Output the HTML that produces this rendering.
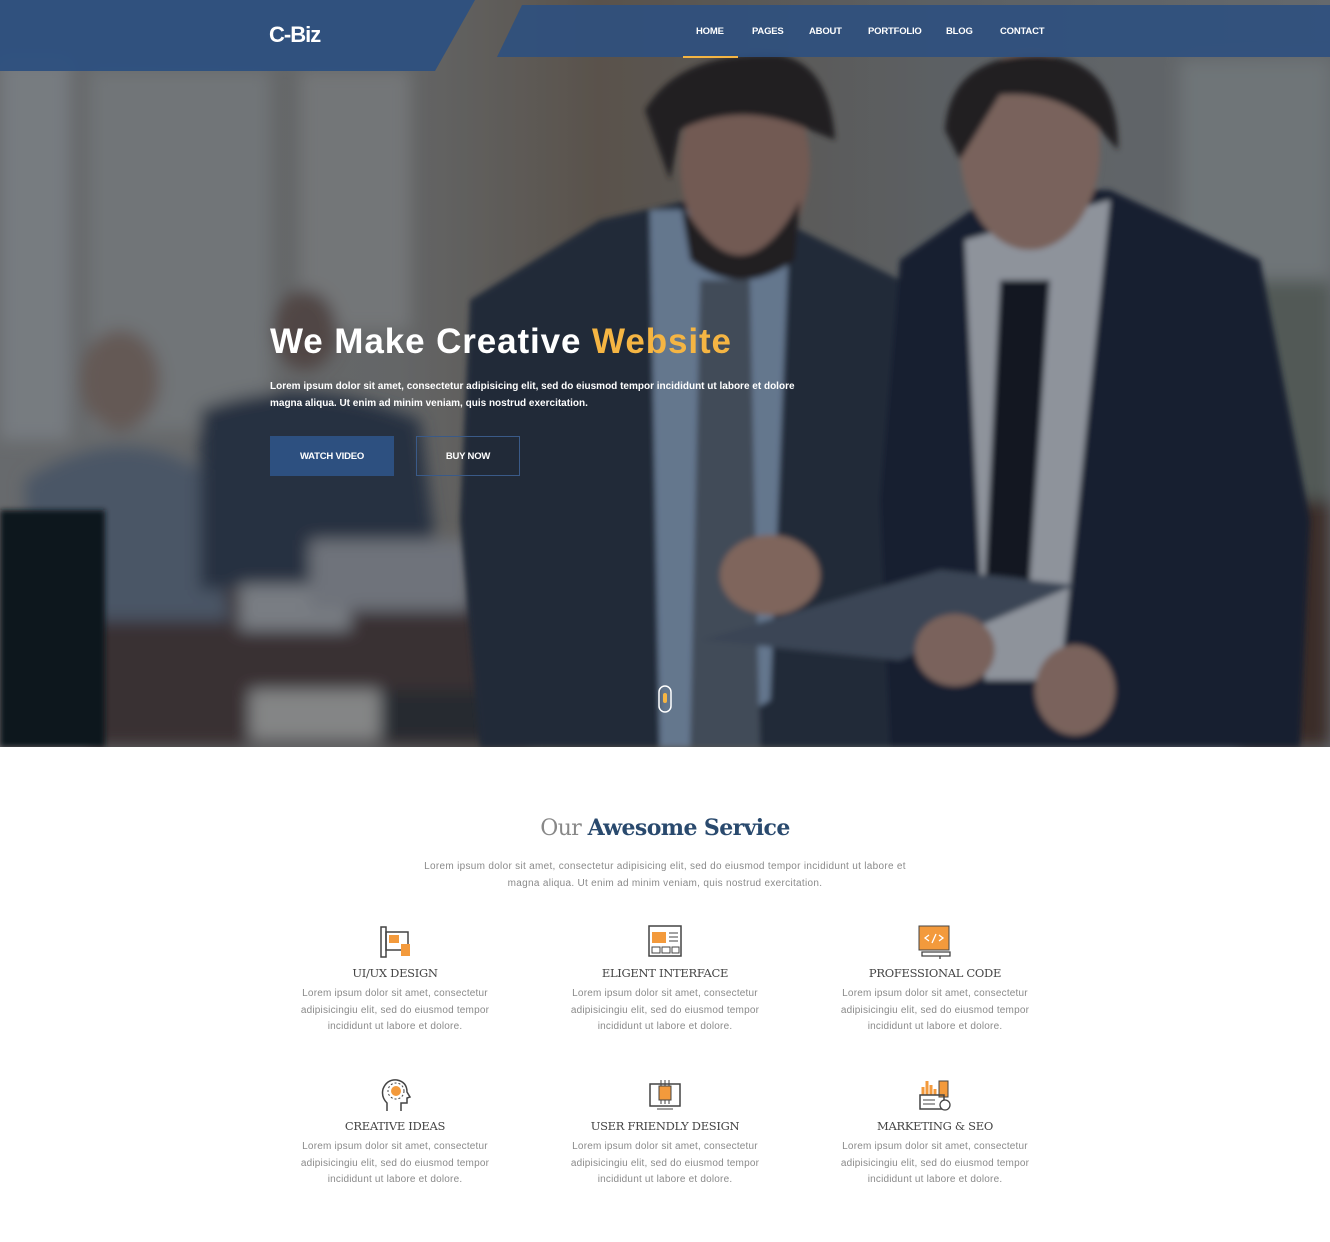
<!DOCTYPE html>
<html><head><meta charset="utf-8"><style>
*{margin:0;padding:0;box-sizing:border-box}
body{width:1330px;height:1242px;background:#fff;font-family:"Liberation Sans",sans-serif;overflow:hidden;position:relative}
#hero{position:absolute;left:0;top:0;width:1330px;height:747px;overflow:hidden}
.nav a{position:absolute;top:26px;color:#fff;font-size:9.5px;font-weight:bold;letter-spacing:-0.2px;text-decoration:none}
h1{position:absolute;left:270px;top:322px;font-size:35px;color:#fff;font-weight:bold;letter-spacing:0.9px}
h1 span{color:#f5b543}
.sub{position:absolute;left:270px;top:378px;width:540px;color:#fff;font-size:10px;line-height:17px;font-weight:bold;letter-spacing:0px}
.btn{position:absolute;top:436px;height:40px;color:#fff;font-size:9.5px;font-weight:bold;display:flex;align-items:center;justify-content:center;letter-spacing:-0.2px}
.title{position:absolute;left:0;width:1330px;top:815px;text-align:center;font-family:"DejaVu Serif",serif;font-size:22px;color:#2a4a6e;letter-spacing:-0.6px}
.title span{color:#888;font-weight:normal}
.lead{position:absolute;left:410px;width:510px;top:858px;text-align:center;color:#8a8a8a;font-size:10px;line-height:17px;letter-spacing:0.3px}
.svc{position:absolute;width:230px;text-align:center}
.svc svg{display:block;margin:0 auto}
.svc h3{font-family:"DejaVu Serif",serif;font-weight:normal;font-size:11.5px;color:#444;margin-top:6px;letter-spacing:-0.3px}
.svc p{color:#8a8a8a;font-size:10px;line-height:16.5px;margin:6px auto 0;width:205px;letter-spacing:0.2px}
</style></head><body>
<div id="hero">
<svg width="1330" height="747" style="position:absolute;left:0;top:0">
<defs>
<filter id="b8"><feGaussianBlur stdDeviation="8"/></filter>
<filter id="b3"><feGaussianBlur stdDeviation="3"/></filter>
<linearGradient id="bg" x1="0" x2="1"><stop offset="0" stop-color="#8f8d88"/><stop offset=".3" stop-color="#8a8780"/><stop offset=".45" stop-color="#7b6b58"/><stop offset=".7" stop-color="#7e7e7a"/><stop offset="1" stop-color="#8b8b88"/></linearGradient>
</defs>
<rect width="1330" height="747" fill="url(#bg)"/>
<g filter="url(#b8)">
<rect x="0" y="60" width="70" height="380" fill="#a5a6a4"/>
<rect x="90" y="70" width="180" height="360" fill="#9c9c98"/>
<rect x="300" y="70" width="110" height="260" fill="#a09e98"/>
<rect x="1180" y="60" width="150" height="220" fill="#9a9c98"/>
<rect x="1240" y="280" width="90" height="230" fill="#6f7468"/>
<rect x="1240" y="500" width="90" height="247" fill="#4f3428"/>
<rect x="90" y="590" width="440" height="157" fill="#4e3a34"/>
<ellipse cx="120" cy="380" rx="40" ry="50" fill="#8a7466"/>
<path d="M25 480 Q120 420 200 470 L230 620 L30 620Z" fill="#65707e"/>
<ellipse cx="305" cy="330" rx="32" ry="40" fill="#6e5a50"/>
<path d="M200 410 Q300 370 420 420 L440 580 L200 590Z" fill="#323a48"/>
<rect x="240" y="585" width="110" height="45" fill="#a8a8a8"/>
<rect x="310" y="540" width="160" height="70" fill="#9a9a9c"/>
<rect x="250" y="690" width="150" height="50" fill="#b8b4ac"/>
<rect x="380" y="690" width="120" height="50" fill="#333"/>
</g>
<rect x="0" y="510" width="105" height="237" fill="#111418" filter="url(#b3)"/>
<g filter="url(#b3)">
<path d="M470 300 L600 220 L690 200 L780 220 L900 280 L935 560 L900 747 L480 747 L460 520Z" fill="#2b313e"/>
<path d="M650 210 L790 210 L770 700 L690 747 L660 747Z" fill="#8a9fb7"/>
<path d="M700 280 L750 280 L760 747 L690 747Z" fill="#59606a"/>
<ellipse cx="745" cy="165" rx="65" ry="95" fill="#9e7663"/>
<path d="M645 110 Q680 50 780 55 Q830 65 835 140 L810 130 Q740 100 680 130 L670 180 Z" fill="#2b221e"/>
<path d="M680 200 Q740 310 800 200 L795 260 Q740 300 690 260Z" fill="#2a211c"/>
<path d="M900 260 L1000 190 L1110 190 L1260 260 L1310 520 L1300 747 L890 747 L880 500Z" fill="#1c2132"/>
<path d="M965 240 L1110 200 L1060 680 L985 680Z" fill="#c6c7cb"/>
<path d="M1000 280 L1050 280 L1030 580 L985 580Z" fill="#15171c"/>
<ellipse cx="1030" cy="150" rx="70" ry="100" fill="#a88270"/>
<path d="M945 130 Q950 55 1040 55 Q1120 60 1118 150 L1100 130 Q1060 90 1000 95 L960 160Z" fill="#2a201c"/>
<ellipse cx="770" cy="575" rx="50" ry="40" fill="#b08670"/>
<path d="M700 640 L940 570 L1075 585 L900 660 Z" fill="#505866"/>
<ellipse cx="955" cy="650" rx="40" ry="36" fill="#a98270"/>
<ellipse cx="1075" cy="690" rx="40" ry="45" fill="#a98270"/>
</g>
<rect width="1330" height="747" fill="#0c1a30" opacity="0.3"/>
<rect x="659" y="686" width="12" height="26" rx="6" fill="none" stroke="#fff" stroke-width="1.5"/>
<rect x="663" y="693" width="4" height="10" rx="2" fill="#f5b543"/>
</svg>
<svg width="1330" height="75" style="position:absolute;left:0;top:0">
<polygon points="0,0 475,0 435,71 0,71" fill="#2d5080" opacity=".95"/>
<polygon points="522,5 1330,5 1330,57 497,57" fill="#2d5080" opacity=".9"/>
<rect x="683" y="56" width="55" height="2" fill="#f5b543"/>
</svg>
<div style="position:absolute;left:269px;top:22px;color:#fff;font-size:22px;font-weight:bold;letter-spacing:-1px">C-Biz</div>
<div class="nav"><a style="left:696px">HOME</a><a style="left:752px">PAGES</a><a style="left:809px">ABOUT</a><a style="left:868px">PORTFOLIO</a><a style="left:946px">BLOG</a><a style="left:1000px">CONTACT</a></div>
<h1>We Make Creative <span>Website</span></h1>
<div class="sub">Lorem ipsum dolor sit amet, consectetur adipisicing elit, sed do eiusmod tempor incididunt ut labore et dolore magna aliqua. Ut enim ad minim veniam, quis nostrud exercitation.</div>
<div class="btn" style="left:270px;width:124px;background:#2d5080">WATCH VIDEO</div>
<div class="btn" style="left:416px;width:104px;border:1px solid #3a5a88">BUY NOW</div>
</div>
<div class="title"><span>Our</span> <b>Awesome Service</b></div>
<div class="lead">Lorem ipsum dolor sit amet, consectetur adipisicing elit, sed do eiusmod tempor incididunt ut labore et magna aliqua. Ut enim ad minim veniam, quis nostrud exercitation.</div>

<div class="svc" style="left:280px;top:924px"><svg width="36" height="36" viewBox="0 0 36 36"><rect x="4" y="3" width="5" height="30" fill="none" stroke="#444" stroke-width="1.5"/><rect x="9" y="8" width="22" height="18" fill="none" stroke="#444" stroke-width="1.5"/><rect x="12" y="11" width="10" height="8" fill="#f39a3c"/><rect x="24" y="20" width="9" height="12" fill="#f39a3c"/></svg><h3>UI/UX DESIGN</h3><p>Lorem ipsum dolor sit amet, consectetur adipisicingiu elit, sed do eiusmod tempor incididunt ut labore et dolore.</p></div>
<div class="svc" style="left:550px;top:924px"><svg width="36" height="36" viewBox="0 0 36 36"><rect x="2" y="2" width="32" height="30" fill="none" stroke="#444" stroke-width="1.5"/><rect x="5" y="8" width="14" height="11" fill="#f39a3c"/><path d="M22 9h9M22 13h9M22 17h9M5 23h8v6H5zM15 23h8v6h-8zM25 23h7v6h-7z" stroke="#444" fill="none"/></svg><h3>ELIGENT INTERFACE</h3><p>Lorem ipsum dolor sit amet, consectetur adipisicingiu elit, sed do eiusmod tempor incididunt ut labore et dolore.</p></div>
<div class="svc" style="left:820px;top:924px"><svg width="36" height="36" viewBox="0 0 36 36"><rect x="2" y="2" width="30" height="24" fill="#f39a3c" stroke="#444"/><path d="M12 11l-4 3 4 3M22 11l4 3-4 3M19 10l-4 9" stroke="#fff" fill="none" stroke-width="1.3"/><path d="M5 28h28v4H5zM15 32h8v3" stroke="#444" fill="none" stroke-width="1.3"/></svg><h3>PROFESSIONAL CODE</h3><p>Lorem ipsum dolor sit amet, consectetur adipisicingiu elit, sed do eiusmod tempor incididunt ut labore et dolore.</p></div>
<div class="svc" style="left:280px;top:1077px"><svg width="36" height="36" viewBox="0 0 36 36"><path d="M10 34V26Q4 20 6 12Q10 2 20 3Q30 5 30 15L33 20L30 21V26H24V34" fill="none" stroke="#444" stroke-width="1.5"/><circle cx="19" cy="14" r="5" fill="#f39a3c"/><circle cx="19" cy="14" r="8" fill="none" stroke="#444" stroke-dasharray="2 2"/></svg><h3>CREATIVE IDEAS</h3><p>Lorem ipsum dolor sit amet, consectetur adipisicingiu elit, sed do eiusmod tempor incididunt ut labore et dolore.</p></div>
<div class="svc" style="left:550px;top:1077px"><svg width="36" height="36" viewBox="0 0 36 36"><rect x="3" y="7" width="30" height="22" fill="none" stroke="#444" stroke-width="1.5"/><rect x="12" y="9" width="12" height="14" fill="#f39a3c" stroke="#444"/><path d="M14 3v6M18 3v6M22 3v6M14 23v4M18 23v4M22 23v4M10 32h16" stroke="#444" fill="none"/></svg><h3>USER FRIENDLY DESIGN</h3><p>Lorem ipsum dolor sit amet, consectetur adipisicingiu elit, sed do eiusmod tempor incididunt ut labore et dolore.</p></div>
<div class="svc" style="left:820px;top:1077px"><svg width="36" height="36" viewBox="0 0 36 36"><path d="M6 18V10M10 18V4M14 18V8M18 18V12" stroke="#f39a3c" stroke-width="3"/><rect x="22" y="4" width="9" height="16" fill="#f39a3c" stroke="#444"/><rect x="3" y="18" width="24" height="14" fill="none" stroke="#444" stroke-width="1.5"/><path d="M6 23h12M6 27h12" stroke="#444"/><circle cx="28" cy="28" r="5" fill="#fff" stroke="#444" stroke-width="1.3"/></svg><h3>MARKETING &amp; SEO</h3><p>Lorem ipsum dolor sit amet, consectetur adipisicingiu elit, sed do eiusmod tempor incididunt ut labore et dolore.</p></div>
</body></html>
